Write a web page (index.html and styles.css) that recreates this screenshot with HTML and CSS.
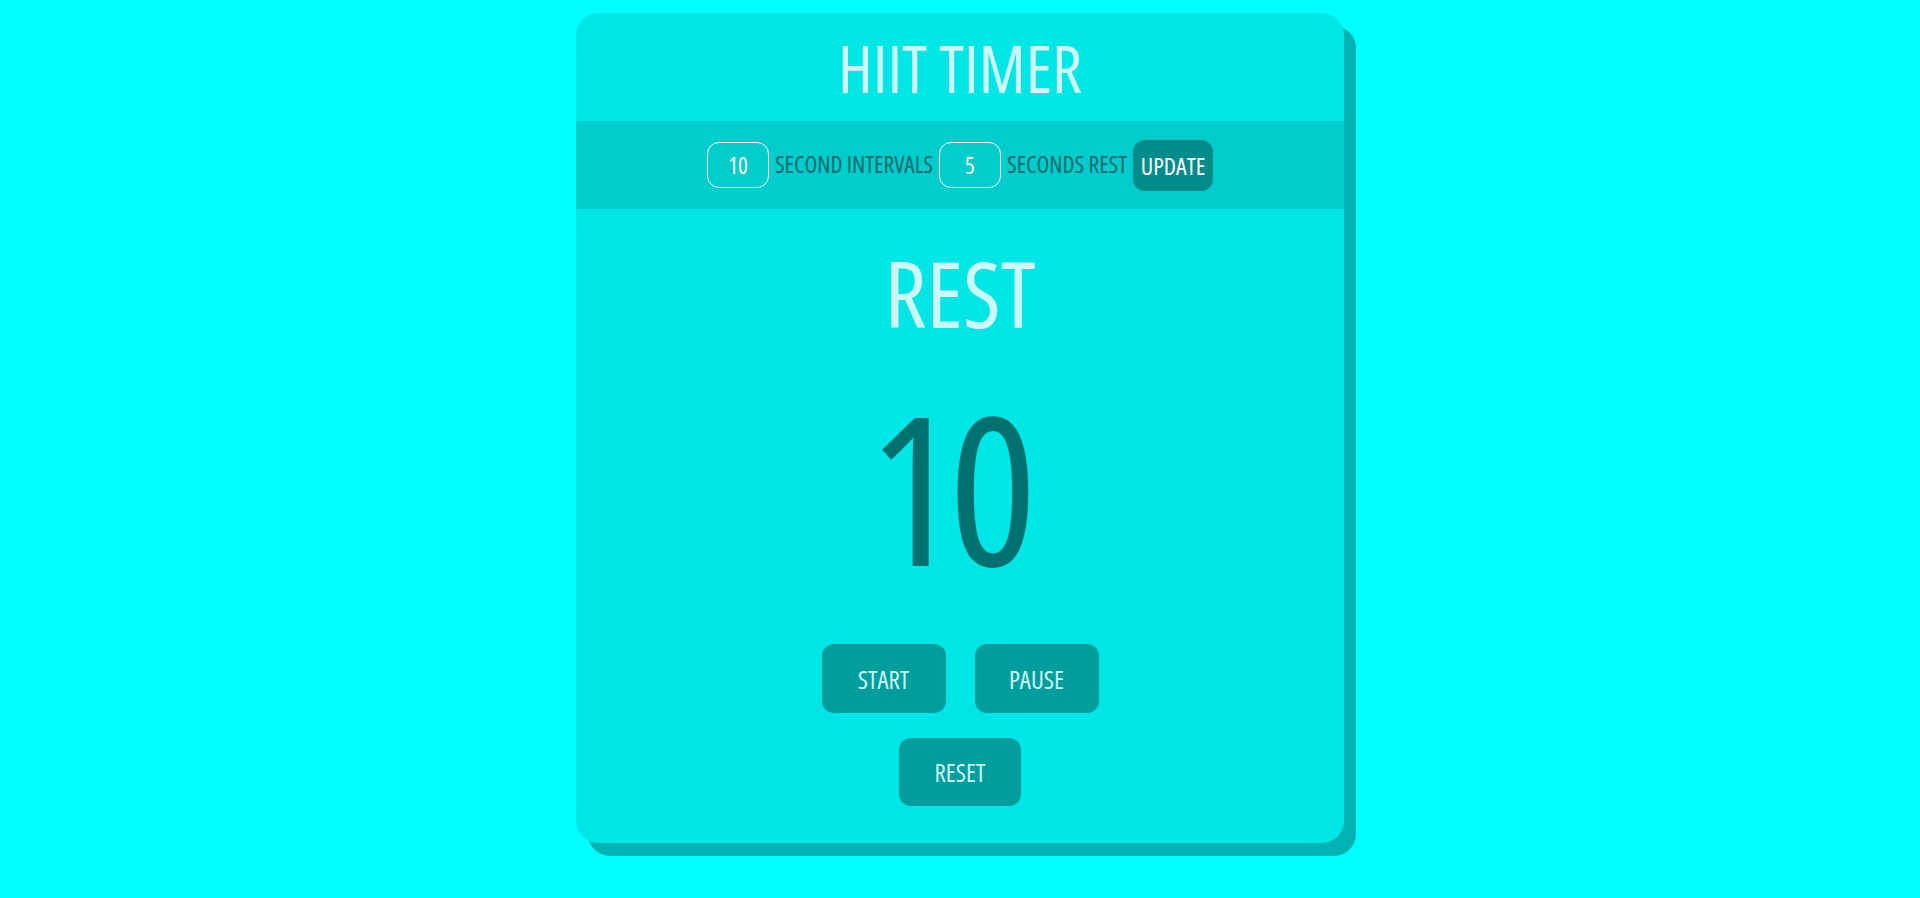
FILE: index.html
```html
<!DOCTYPE html>
<html lang="en">
<head>
<meta charset="utf-8">
<title>HIIT Timer</title>
<link rel="stylesheet" href="styles.css">
</head>
<body>
<main class="card">
  <header class="card-header">
    <h1 class="title">HIIT TIMER</h1>
  </header>
  <section class="settings">
    <input class="num-input" type="text" value="10">
    <span class="label">SECOND INTERVALS</span>
    <input class="num-input" type="text" value="5">
    <span class="label">SECONDS REST</span>
    <button class="update-btn">UPDATE</button>
  </section>
  <section class="display">
    <div class="phase">REST</div>
    <div class="count">10</div>
  </section>
  <section class="controls">
    <div class="row">
      <button class="ctrl-btn">START</button>
      <button class="ctrl-btn">PAUSE</button>
    </div>
    <div class="row">
      <button class="ctrl-btn reset">RESET</button>
    </div>
  </section>
</main>
</body>
</html>
```
FILE: styles.css
```css
* { box-sizing: border-box; }
html, body { height: 100%; }
body {
  margin: 0;
  padding-top: 13px;
  background: #00ffff;
  font-family: "Open Sans", "Noto Sans", sans-serif;
  font-stretch: 75%;
}
.card {
  width: 768px;
  margin: 0 auto;
  background: #00e6e6;
  border-radius: 22px;
  box-shadow: 12px 13px 0 #00b2b2;
  overflow: hidden;
  padding-bottom: 37px;
}
.card-header {
  height: 108px;
  display: flex;
  align-items: center;
  justify-content: center;
}
.title {
  margin: 0;
  font-weight: 400;
  font-size: 66px;
  line-height: 1;
  color: #ccfafa;
}
.settings {
  height: 88px;
  background: #00cccc;
  display: flex;
  align-items: center;
  justify-content: center;
  gap: 6px;
}
.num-input {
  width: 62px;
  height: 46px;
  background: transparent;
  border: 1px solid #ffffff;
  border-radius: 12px;
  color: #ffffff;
  text-align: center;
  font-family: inherit;
  font-stretch: 75%;
  font-weight: 500;
  font-size: 23px;
  padding: 0;
}
.label {
  font-size: 23.5px;
  line-height: 1;
  color: #006b6b;
}
.update-btn {
  width: 80px;
  height: 51px;
  border: none;
  border-radius: 12px;
  background: #008b8b;
  color: #ffffff;
  font-family: inherit;
  font-stretch: 75%;
  font-weight: 500;
  font-size: 24px;
  padding: 0;
}
.display {
  display: flex;
  flex-direction: column;
  align-items: center;
}
.phase {
  margin-top: 38px;
  font-size: 92px;
  line-height: 1;
  color: #ccfafa;
}
.count {
  margin-top: 44px;
  font-size: 207px;
  line-height: 1;
  letter-spacing: -8px;
  padding-right: 22px;
  color: #007070;
}
.controls {
  display: flex;
  flex-direction: column;
  align-items: center;
  gap: 25px;
  margin-top: 54px;
}
.row {
  display: flex;
  gap: 29px;
}
.ctrl-btn {
  width: 124px;
  height: 69px;
  border: none;
  border-radius: 12px;
  background: #009d9d;
  color: #ccfafa;
  font-family: inherit;
  font-stretch: 75%;
  font-size: 25px;
  padding: 0;
}
.ctrl-btn.reset {
  width: 122px;
  height: 68px;
}
```
